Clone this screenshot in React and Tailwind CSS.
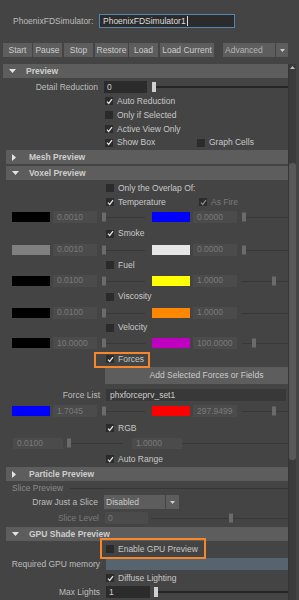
import React from 'react';

// shared text colours
const LABEL = 'text-[#bdbdbd]';
const DIM = 'text-[#7a7a7a]';

function Tri({ open }) {
  return open ? (
    <svg width="7" height="4" viewBox="0 0 7 4"><path d="M0 0H7L3.5 4Z" fill="#e4e4e4" /></svg>
  ) : (
    <svg width="4" height="7" viewBox="0 0 4 7"><path d="M0 0L4 3.5L0 7Z" fill="#e4e4e4" /></svg>
  );
}

function Header({ title, open }) {
  return (
    <div className="h-[14px] bg-[#5d5d5d] flex items-center">
      <div className="w-[23px] pl-[6px] flex items-center">
        <Tri open={open} />
      </div>
      <span className="font-bold text-[#cdcdcd]">{title}</span>
    </div>
  );
}

function Check({ on, label, disabled }) {
  return (
    <div className="flex items-center">
      <div className="w-[8px] h-[8px] bg-[#2b2b2b] flex items-center justify-center">
        {on && (
          <svg width="7" height="7" viewBox="0 0 7 7">
            <path d="M1 3.6L2.7 5.5L6 1.2" fill="none" stroke={disabled ? '#8a8a8a' : '#e2e2e2'} strokeWidth="1.3" />
          </svg>
        )}
      </div>
      <span className={`ml-[4px] ${disabled ? DIM : 'text-[#c8c8c8]'}`}>{label}</span>
    </div>
  );
}

// one "swatch | field | slider | swatch | field | slider" line of the voxel section
function ColorRow({ h, c1, v1, c2, v2, t2, hideT2 }) {
  return (
    <div className={`${h} flex items-center pl-[6px]`}>
      <div className={`w-[38px] h-[10px] ${c1}`} />
      <div className={`ml-[3px] w-[44px] h-[12px] bg-[#4b4b4b] pl-[4px] flex items-center ${DIM}`}>{v1}</div>
      <div className="relative w-[55px] h-full">
        <div className="absolute left-[5px] w-[43px] top-1/2 h-px bg-[#383838]" />
        <div className="absolute left-[5px] top-1/2 -translate-y-1/2 w-[4px] h-[9px] bg-[#6b6b6b]" />
      </div>
      <div className={`w-[38px] h-[10px] ${c2}`} />
      <div className={`ml-[3px] w-[44px] h-[12px] bg-[#4b4b4b] pl-[4px] flex items-center ${DIM}`}>{v2}</div>
      <div className="relative flex-1 h-full">
        <div className="absolute left-[5px] right-0 top-1/2 h-px bg-[#383838]" />
        {!hideT2 && <div className={`absolute ${t2} top-1/2 -translate-y-1/2 w-[4px] h-[9px] bg-[#6b6b6b]`} />}
      </div>
    </div>
  );
}

export default function App() {
  return (
    <div className="w-[299px] h-[600px] bg-[#444444] overflow-hidden flex flex-col font-['Liberation_Sans',Arial,sans-serif] text-[8.5px] leading-none">
      {/* simulator name */}
      <div className="mt-[14px] h-[14px] flex items-center">
        <div className={`pl-[13px] w-[99px] ${LABEL}`}>PhoenixFDSimulator:</div>
        <div className="w-[136px] h-[14px] bg-[#2b2b2b] border border-[#5585ad] pl-[3px] flex items-center text-[#dddddd]">
          PhoenixFDSimulator1
          <div className="ml-px w-px h-[10px] bg-[#dddddd]" />
        </div>
      </div>

      {/* toolbar */}
      <div className="mt-[15px] h-[14px] flex text-[#cccccc]">
        <div className="ml-[3px] w-[29px] bg-[#5d5d5d] flex items-center justify-center">Start</div>
        <div className="ml-[1px] w-[29px] bg-[#5d5d5d] flex items-center justify-center">Pause</div>
        <div className="ml-[2px] w-[29px] bg-[#5d5d5d] flex items-center justify-center">Stop</div>
        <div className="ml-[2px] w-[33px] bg-[#5d5d5d] flex items-center justify-center">Restore</div>
        <div className="ml-[1px] w-[29px] bg-[#5d5d5d] flex items-center justify-center">Load</div>
        <div className="ml-[2px] w-[54px] bg-[#5d5d5d] flex items-center justify-center">Load Current</div>
        <div className="ml-[9px] w-[52px] bg-[#5d5d5d] pl-[2px] flex items-center text-[#b4b4b4]">Advanced</div>
        <div className="ml-[1px] w-[12px] bg-[#5d5d5d] flex items-center justify-center">
          <svg width="5" height="3" viewBox="0 0 5 3"><path d="M0 0H5L2.5 3Z" fill="#cfcfcf" /></svg>
        </div>
      </div>

      {/* scroll area */}
      <div className="mt-[7px] flex-1 flex pl-[3px]">
        <div className="w-[285px] flex flex-col">
          <Header title="Preview" open />
          <div className="mt-[2px] h-[14px] flex items-center">
            <div className={`w-[95px] text-right ${LABEL}`}>Detail Reduction</div>
            <div className="ml-[6px] w-[43px] h-[12px] bg-[#2b2b2b] pl-[3px] flex items-center text-[#cccccc]">0</div>
            <div className="relative flex-1 h-full">
              <div className="absolute left-[5px] right-0 top-1/2 -translate-y-1/2 h-[2px] bg-[#252525]" />
              <div className="absolute left-[5px] top-1/2 -translate-y-1/2 w-[4px] h-[10px] bg-[#d0d0d0]" />
            </div>
          </div>
          <div className="h-[14px] pl-[102px] flex items-center"><Check on label="Auto Reduction" /></div>
          <div className="h-[14px] pl-[102px] flex items-center"><Check label="Only if Selected" /></div>
          <div className="h-[14px] pl-[102px] flex items-center"><Check on label="Active View Only" /></div>
          <div className="h-[13px] pl-[102px] flex items-center">
            <div className="w-[92px]"><Check on label="Show Box" /></div>
            <Check label="Graph Cells" />
          </div>

          {/* nested frames */}
          <div className="ml-[3px] mt-[1px]">
            <Header title="Mesh Preview" />
            <div className="mt-[2px]">
              <Header title="Voxel Preview" open />
            </div>
            <div className="mt-[1px] h-[14px] pl-[100px] flex items-center"><Check label="Only the Overlap Of:" /></div>
            <div className="h-[14px] pl-[100px] flex items-center">
              <div className="w-[93px]"><Check on label="Temperature" /></div>
              <Check on disabled label="As Fire" />
            </div>
            <ColorRow h="h-[16px]" c1="bg-[#000000]" v1="0.0010" c2="bg-[#0000ff]" v2="0.0000" t2="left-[5px]" />
            <div className="h-[17px] pl-[100px] flex items-center"><Check on label="Smoke" /></div>
            <ColorRow h="h-[15px]" c1="bg-[#808080]" v1="0.0010" c2="bg-[#e6e6e6]" v2="0.0000" t2="left-[5px]" />
            <div className="h-[16px] pl-[100px] flex items-center"><Check label="Fuel" /></div>
            <ColorRow h="h-[15px]" c1="bg-[#000000]" v1="0.0100" c2="bg-[#ffff00]" v2="1.0000" t2="left-[35px]" />
            <div className="h-[17px] pl-[100px] flex items-center"><Check label="Viscosity" /></div>
            <ColorRow h="h-[15px]" c1="bg-[#000000]" v1="0.0100" c2="bg-[#ff8800]" v2="1.0000" hideT2 />
            <div className="h-[15px] pl-[100px] flex items-center"><Check label="Velocity" /></div>
            <ColorRow h="h-[16px]" c1="bg-[#000000]" v1="10.0000" c2="bg-[#c000c0]" v2="100.0000" t2="left-[15px]" />
            <div className="h-[16px] pl-[100px] flex items-center">
              <div className="relative h-full flex items-center">
                <Check on label="Forces" />
                <div className="absolute left-[-12px] right-[-6px] top-[1px] bottom-[-1px] border-2 border-[#f5872a]" />
              </div>
            </div>
            <div className="h-[17px] ml-[99px] bg-[#5d5d5d] pl-[20px] flex items-center justify-center text-[#cccccc]">
              Add Selected Forces or Fields
            </div>
            <div className="mt-[4px] h-[14px] flex items-center">
              <div className={`w-[94px] text-right ${LABEL}`}>Force List</div>
              <div className="ml-[6px] w-[180px] h-[12px] bg-[#383838] pl-[4px] flex items-center text-[#cccccc]">phxforceprv_set1</div>
            </div>
            <div className="mt-[1px]">
              <ColorRow h="h-[16px]" c1="bg-[#0000ff]" v1="1.7045" c2="bg-[#ff0000]" v2="297.9499" t2="left-[35px]" />
            </div>
            <div className="mt-[1px] h-[16px] pl-[100px] flex items-center"><Check on label="RGB" /></div>
            <div className="h-[14px] flex items-center pl-[7px]">
              <div className={`w-[50px] h-[11px] bg-[#4b4b4b] pl-[4px] flex items-center ${DIM}`}>0.0100</div>
              <div className="relative w-[69px] h-full">
                <div className="absolute left-[4px] w-[56px] top-1/2 h-px bg-[#383838]" />
                <div className="absolute left-[4px] top-1/2 -translate-y-1/2 w-[4px] h-[9px] bg-[#6b6b6b]" />
              </div>
              <div className={`w-[50px] h-[11px] bg-[#4b4b4b] pl-[4px] flex items-center ${DIM}`}>1.0000</div>
              <div className="relative flex-1 h-full">
                <div className="absolute left-0 right-0 top-1/2 h-px bg-[#383838]" />
              </div>
            </div>
            <div className="mt-[2px] h-[14px] pl-[100px] flex items-center"><Check on label="Auto Range" /></div>
            <div className="mt-[1px]">
              <Header title="Particle Preview" />
            </div>
          </div>

          {/* slice */}
          <div className="h-[14px] pl-[9px] flex items-center">
            <span className="text-[#8a8a8a]">Slice Preview</span>
            <div className="ml-[7px] flex-1 h-px bg-[#363636]" />
          </div>
          <div className="h-[14px] flex">
            <div className={`w-[95px] text-right self-center ${LABEL}`}>Draw Just a Slice</div>
            <div className="ml-[6px] w-[61px] bg-[#5d5d5d] pl-[2px] flex items-center text-[#cccccc]">Disabled</div>
            <div className="ml-[1px] w-[13px] bg-[#5d5d5d] flex items-center justify-center">
              <svg width="5" height="3" viewBox="0 0 5 3"><path d="M0 0H5L2.5 3Z" fill="#cfcfcf" /></svg>
            </div>
          </div>
          <div className="mt-[2px] h-[14px] flex items-center">
            <div className={`w-[96px] text-right ${DIM}`}>Slice Level</div>
            <div className={`ml-[6px] w-[43px] h-[12px] bg-[#4b4b4b] pl-[3px] flex items-center ${DIM}`}>0</div>
            <div className="relative flex-1 h-full">
              <div className="absolute left-[3px] right-0 top-1/2 h-px bg-[#383838]" />
              <div className="absolute left-[81px] top-1/2 -translate-y-1/2 w-[4px] h-[9px] bg-[#6b6b6b]" />
            </div>
          </div>

          <div className="ml-[3px] mt-[2px]">
            <Header title="GPU Shade Preview" open />
            <div className="mt-[1px] h-[14px] pl-[100px] flex items-center">
              <div className="relative h-full flex items-center">
                <Check label="Enable GPU Preview" />
                <div className="absolute left-[-6px] right-[-8px] top-[-4px] bottom-[-3px] border-2 border-[#f5872a]" />
              </div>
            </div>
            <div className="mt-[1px] h-[14px] flex items-center">
              <div className={`w-[94px] text-right ${LABEL}`}>Required GPU memory</div>
              <div className="ml-[6px] flex-1 h-[12px] bg-[#566470]" />
            </div>
            <div className="h-[14px] pl-[100px] flex items-center"><Check on label="Diffuse Lighting" /></div>
            <div className="h-[14px] flex items-center">
              <div className={`w-[94px] text-right ${LABEL}`}>Max Lights</div>
              <div className="ml-[6px] w-[44px] h-[12px] bg-[#2b2b2b] pl-[3px] flex items-center text-[#cccccc]">1</div>
              <div className="relative flex-1 h-full">
                <div className="absolute left-[4px] right-0 top-1/2 -translate-y-1/2 h-[2px] bg-[#252525]" />
                <div className="absolute left-[4px] top-1/2 -translate-y-1/2 w-[4px] h-[10px] bg-[#d0d0d0]" />
              </div>
            </div>
          </div>
        </div>

        {/* scrollbar */}
        <div className="w-[9px] flex">
          <div className="w-[1px] bg-[#353535]" />
          <div className="w-[7px] bg-[#3b3b3b] flex flex-col">
            <div className="h-[8px] pt-[2px] flex justify-center">
              <svg width="5" height="3" viewBox="0 0 5 3"><path d="M0 3H5L2.5 0Z" fill="#bdbdbd" /></svg>
            </div>
            <div className="mt-[91px] h-[297px] rounded-t-[3px] rounded-b-[3px] bg-[#585858]" />
          </div>
        </div>
      </div>
    </div>
  );
}
